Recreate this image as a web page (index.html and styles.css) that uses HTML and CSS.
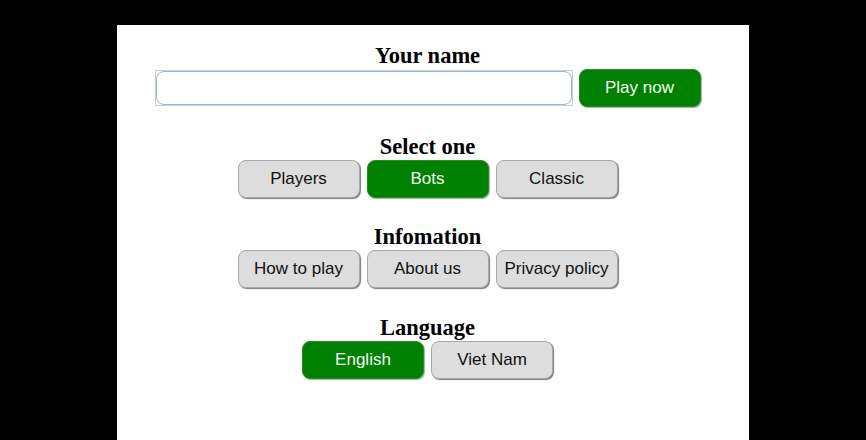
FILE: index.html
```html
<!DOCTYPE html>
<html>
<head>
<meta charset="utf-8">
<title>Game</title>
<link rel="stylesheet" href="styles.css">
</head>
<body>
<main class="panel">
  <section class="group">
    <h2 class="title">Your name</h2>
    <div class="row">
      <span class="field"><input class="name-input" type="text"></span>
      <button class="btn btn-green">Play now</button>
    </div>
  </section>
  <section class="group">
    <h2 class="title">Select one</h2>
    <div class="row">
      <button class="btn">Players</button>
      <button class="btn btn-green">Bots</button>
      <button class="btn">Classic</button>
    </div>
  </section>
  <section class="group">
    <h2 class="title">Infomation</h2>
    <div class="row">
      <button class="btn">How to play</button>
      <button class="btn">About us</button>
      <button class="btn">Privacy policy</button>
    </div>
  </section>
  <section class="group">
    <h2 class="title">Language</h2>
    <div class="row">
      <button class="btn btn-green">English</button>
      <button class="btn">Viet Nam</button>
    </div>
  </section>
</main>
</body>
</html>
```

FILE: styles.css
```css
html, body {
  margin: 0;
  padding: 0;
  background: #000;
  height: 100%;
}
body {
  padding-top: 25px;
  box-sizing: border-box;
}
.panel {
  box-sizing: border-box;
  width: 632px;
  height: 415px;
  margin: 0 auto;
  background: #fff;
  padding: 18px 11px 0 0;
  display: flex;
  flex-direction: column;
  align-items: center;
  gap: 26.5px;
}
.group {
  display: flex;
  flex-direction: column;
  align-items: center;
  gap: 1px;
}
.title {
  margin: 0;
  font-family: "Liberation Serif", "Times New Roman", serif;
  font-weight: bold;
  font-size: 22.5px;
  line-height: 25px;
  color: #000;
}
.row {
  display: flex;
  justify-content: center;
  align-items: center;
  gap: 7px;
  height: 38px;
}
.field {
  display: block;
  box-sizing: border-box;
  width: 418px;
  height: 36px;
  border: 1px solid #c3d3ef;
  margin-right: -1px;
}
.name-input {
  display: block;
  box-sizing: border-box;
  width: 100%;
  height: 100%;
  margin: 0;
  border: 1px solid #a7afc0;
  border-radius: 8px;
  background: #fff;
  outline: none;
  font-family: "Liberation Sans", Arial, sans-serif;
  font-size: 17px;
  padding: 0 8px;
}
.btn {
  box-sizing: border-box;
  width: 122px;
  height: 38px;
  margin: 0;
  padding: 0;
  border: 1px solid #a8a8a8;
  border-radius: 8px;
  background: #dddddd;
  box-shadow: 1px 1px 1px #7a7a7a;
  font-family: "Liberation Sans", Arial, sans-serif;
  font-size: 17px;
  color: #111;
  cursor: pointer;
}
.btn-green {
  background: #008000;
  border-color: #2a8a2a;
  color: #f2fff2;
  box-shadow: 1px 1px 1px #9ab59a;
}
```
